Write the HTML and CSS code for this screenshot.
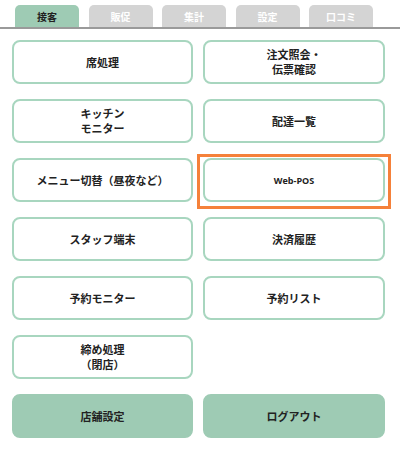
FILE: index.html
```html
<!DOCTYPE html>
<html lang="ja">
<head>
<meta charset="utf-8">
<link rel="stylesheet" href="styles.css">
</head>
<body>
<div class="tabs">
  <div class="tab active">接客</div>
  <div class="tab">販促</div>
  <div class="tab">集計</div>
  <div class="tab">設定</div>
  <div class="tab">口コミ</div>
</div>
<div class="grid">
  <div class="btn">席処理</div>
  <div class="btn">注文照会・<br>伝票確認</div>
  <div class="btn">キッチン<br>モニター</div>
  <div class="btn">配達一覧</div>
  <div class="btn">メニュー切替（昼夜など）</div>
  <div class="btn highlighted"><span class="latin">Web-POS</span></div>
  <div class="btn">スタッフ端末</div>
  <div class="btn">決済履歴</div>
  <div class="btn">予約モニター</div>
  <div class="btn">予約リスト</div>
  <div class="btn">締め処理<br>（閉店）</div>
  <div class="empty"></div>
  <div class="btn filled">店舗設定</div>
  <div class="btn filled">ログアウト</div>
</div>
</body>
</html>
```
FILE: styles.css
```css
html, body {
  margin: 0;
  padding: 0;
  background: #ffffff;
  font-family: "Noto Sans CJK JP", "Noto Sans", sans-serif;
  color: #222222;
}

.tabs {
  display: flex;
  gap: 9.5px;
  padding: 5px 0 0 15px;
  border-bottom: 2px solid #9a9a9a;
  height: 22px;
}

.tab {
  width: 64px;
  height: 22px;
  border-radius: 5px 5px 0 0;
  background: #d4d4d4;
  color: #ffffff;
  font-size: 10px;
  font-weight: 700;
  display: flex;
  align-items: center;
  justify-content: center;
}

.tab.active {
  background: #9ecbb4;
  color: #222222;
}

.grid {
  display: grid;
  grid-template-columns: 181px 182px;
  grid-auto-rows: 44px;
  column-gap: 10px;
  row-gap: 15px;
  padding: 11px 0 0 12px;
}

.btn {
  position: relative;
  box-sizing: border-box;
  border: 2px solid #a8d6bf;
  border-radius: 8px;
  background: #ffffff;
  display: flex;
  align-items: center;
  justify-content: center;
  text-align: center;
  font-size: 11px;
  font-weight: 700;
  line-height: 15px;
}

.btn.filled {
  background: #9ecbb4;
  border-color: #9ecbb4;
}

.latin {
  font-family: "Open Sans", "Noto Sans", sans-serif;
  font-size: 9px;
}

.highlighted::after {
  content: "";
  position: absolute;
  left: -8px;
  right: -8px;
  top: -6px;
  bottom: -9px;
  border: 3px solid #f5813a;
  pointer-events: none;
}
```
